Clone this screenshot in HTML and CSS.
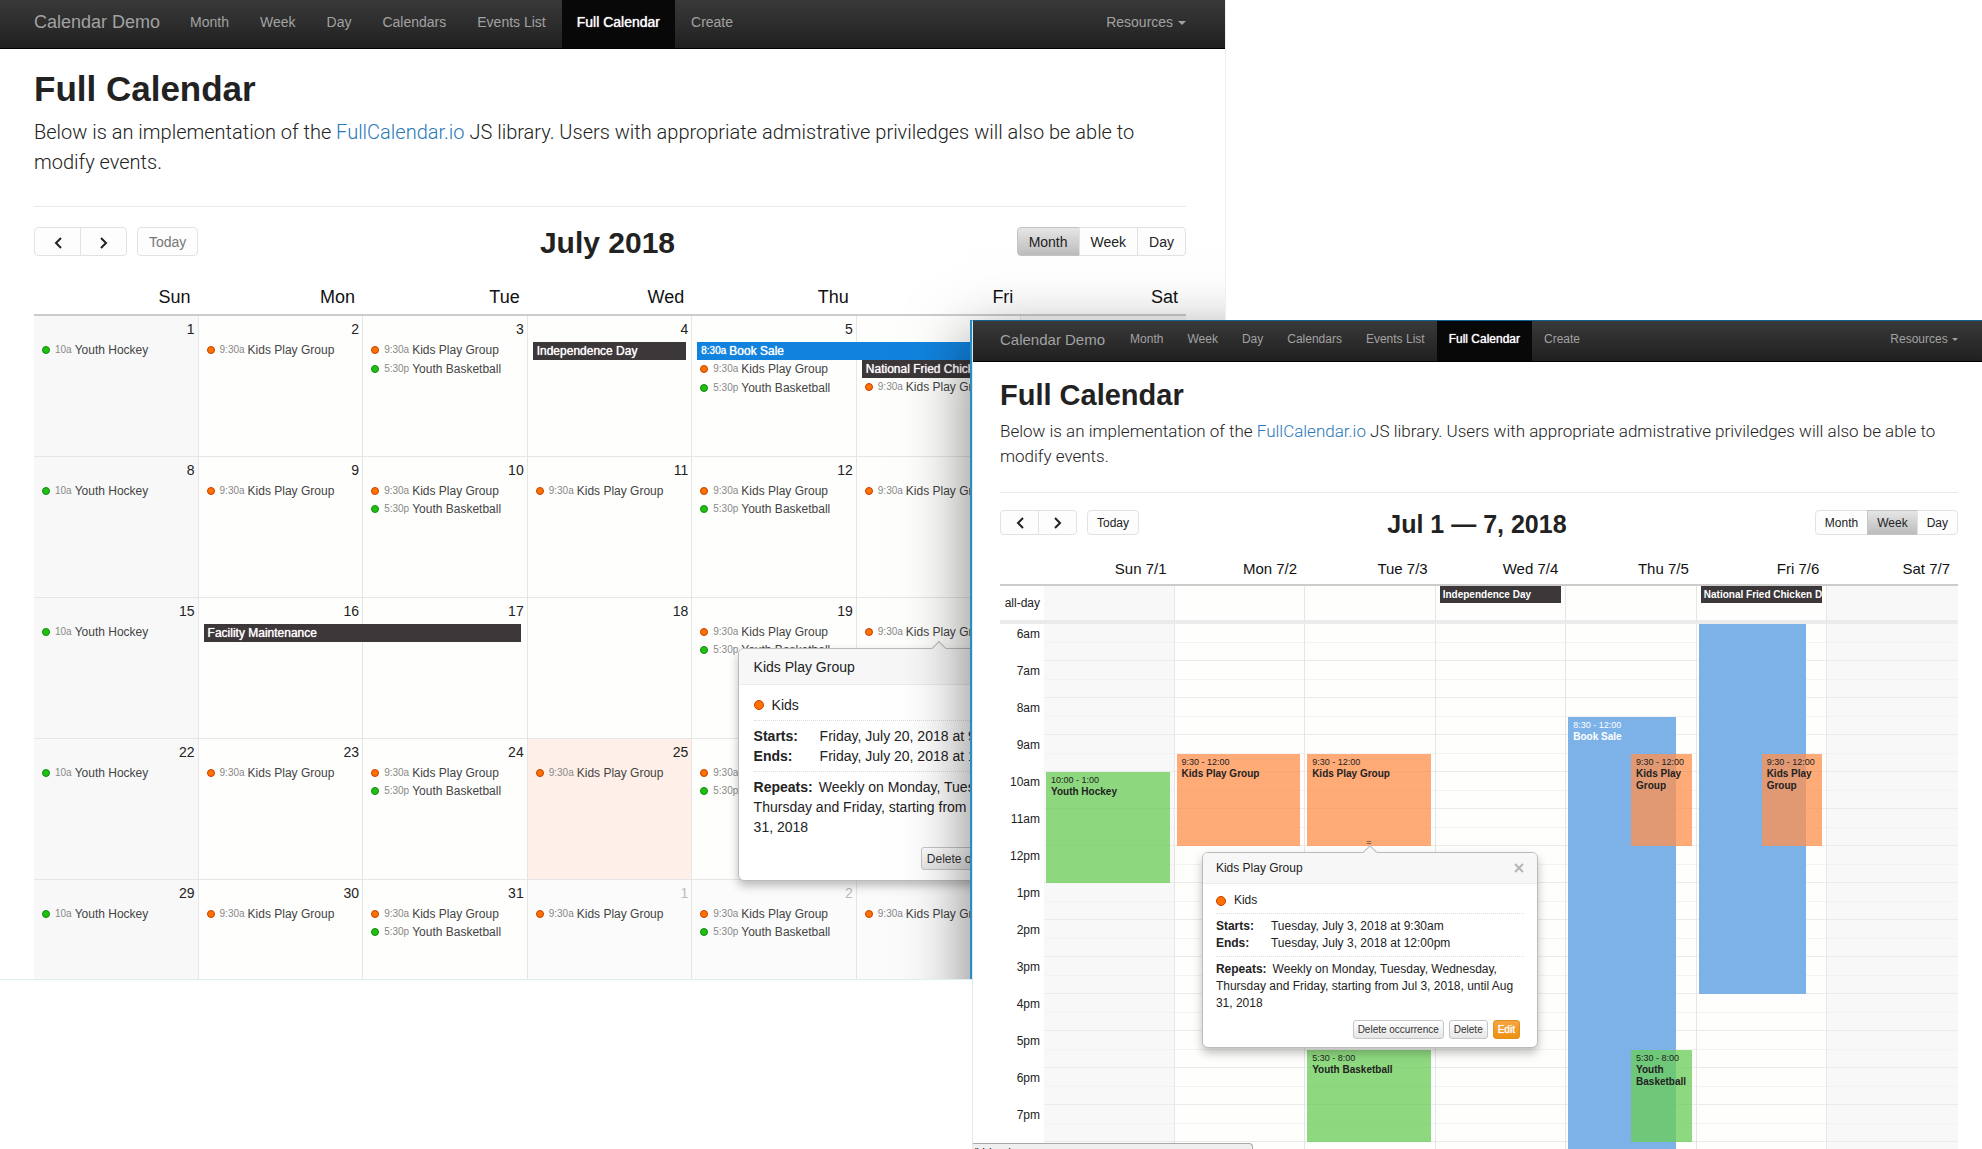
FILE: index.html
```html
<!DOCTYPE html>
<html lang="en">
<head>
<meta charset="utf-8">
<title>Full Calendar</title>
<link rel="stylesheet" href="styles.css">
</head>
<body>
<div class="stage">

<section class="window window-month">
  <nav class="navbar">
    <a class="brand" href="#">Calendar Demo</a>
    <ul class="nav">
      <li><a href="#">Month</a></li>
      <li><a href="#">Week</a></li>
      <li><a href="#">Day</a></li>
      <li><a href="#">Calendars</a></li>
      <li><a href="#">Events List</a></li>
      <li><a class="active" href="#">Full Calendar</a></li>
      <li><a href="#">Create</a></li>
    </ul>
    <a class="resources" href="#">Resources <span class="caret"></span></a>
  </nav>
  <div class="content">
    <h1>Full Calendar</h1>
    <p class="lead">Below is an implementation of the <a href="#">FullCalendar.io</a> JS library. Users with appropriate admistrative priviledges will also be able to modify events.</p>
    <hr>
    <div class="toolbar">
      <div class="tools">
        <div class="group">
          <button class="btn arrow" type="button" aria-label="Previous"><svg viewBox="0 0 10 12"><path d="M8 1 3 6l5 5"/></svg></button>
          <button class="btn arrow" type="button" aria-label="Next"><svg viewBox="0 0 10 12"><path d="M2 1l5 5-5 5"/></svg></button>
        </div>
        <div class="group"><button class="btn" type="button" disabled>Today</button></div>
      </div>
      <h2>July 2018</h2>
      <div class="group">
        <button class="btn on" type="button">Month</button>
        <button class="btn" type="button">Week</button>
        <button class="btn" type="button">Day</button>
      </div>
    </div>
    <table class="month">
      <thead><tr><th>Sun</th><th>Mon</th><th>Tue</th><th>Wed</th><th>Thu</th><th>Fri</th><th>Sat</th></tr></thead>
      <tbody>
        <tr class="first">
          <td class="weekend"><p class="num">1</p><ul><li><i class="dot green"></i><time>10a</time>Youth Hockey</li></ul></td>
          <td><p class="num">2</p><ul><li><i class="dot"></i><time>9:30a</time>Kids Play Group</li></ul></td>
          <td><p class="num">3</p><ul><li><i class="dot"></i><time>9:30a</time>Kids Play Group</li><li><i class="dot green"></i><time>5:30p</time>Youth Basketball</li></ul></td>
          <td><p class="num">4</p><ul><li class="bar">Independence Day</li></ul></td>
          <td><p class="num">5</p><ul><li class="bar span2 blue"><time>8:30a</time>Book Sale</li><li><i class="dot"></i><time>9:30a</time>Kids Play Group</li><li><i class="dot green"></i><time>5:30p</time>Youth Basketball</li></ul></td>
          <td><p class="num">6</p><ul><li></li><li class="bar">National Fried Chicken Day</li><li><i class="dot"></i><time>9:30a</time>Kids Play Group</li></ul></td>
          <td class="weekend"><p class="num">7</p></td>
        </tr>
        <tr>
          <td class="weekend"><p class="num">8</p><ul><li><i class="dot green"></i><time>10a</time>Youth Hockey</li></ul></td>
          <td><p class="num">9</p><ul><li><i class="dot"></i><time>9:30a</time>Kids Play Group</li></ul></td>
          <td><p class="num">10</p><ul><li><i class="dot"></i><time>9:30a</time>Kids Play Group</li><li><i class="dot green"></i><time>5:30p</time>Youth Basketball</li></ul></td>
          <td><p class="num">11</p><ul><li><i class="dot"></i><time>9:30a</time>Kids Play Group</li></ul></td>
          <td><p class="num">12</p><ul><li><i class="dot"></i><time>9:30a</time>Kids Play Group</li><li><i class="dot green"></i><time>5:30p</time>Youth Basketball</li></ul></td>
          <td><p class="num">13</p><ul><li><i class="dot"></i><time>9:30a</time>Kids Play Group</li></ul></td>
          <td class="weekend"><p class="num">14</p></td>
        </tr>
        <tr>
          <td class="weekend"><p class="num">15</p><ul><li><i class="dot green"></i><time>10a</time>Youth Hockey</li></ul></td>
          <td><p class="num">16</p><ul><li class="bar span2">Facility Maintenance</li></ul></td>
          <td><p class="num">17</p></td>
          <td><p class="num">18</p></td>
          <td><p class="num">19</p><ul><li><i class="dot"></i><time>9:30a</time>Kids Play Group</li><li><i class="dot green"></i><time>5:30p</time>Youth Basketball</li></ul></td>
          <td><p class="num">20</p><ul><li><i class="dot"></i><time>9:30a</time>Kids Play Group</li></ul>
            <div class="popover">
              <h3>Kids Play Group <button class="close" type="button" aria-label="Close"><svg viewBox="0 0 10 10"><path d="M1 1l8 8M9 1 1 9"/></svg></button></h3>
              <div class="pop-body">
                <p class="cal"><i class="dot"></i>Kids</p>
                <dl><dt>Starts:</dt><dd>Friday, July 20, 2018 at 9:30am</dd><dt>Ends:</dt><dd>Friday, July 20, 2018 at 12:00pm</dd></dl>
                <p class="repeats"><b>Repeats:</b>Weekly on Monday, Tuesday, Wednesday, Thursday and Friday, starting from Jul 3, 2018, until Aug 31, 2018</p>
                <div class="actions"><button type="button">Delete occurrence</button><button type="button">Delete</button><button class="edit" type="button">Edit</button></div>
              </div>
            </div>
          </td>
          <td class="weekend"><p class="num">21</p></td>
        </tr>
        <tr>
          <td class="weekend"><p class="num">22</p><ul><li><i class="dot green"></i><time>10a</time>Youth Hockey</li></ul></td>
          <td><p class="num">23</p><ul><li><i class="dot"></i><time>9:30a</time>Kids Play Group</li></ul></td>
          <td><p class="num">24</p><ul><li><i class="dot"></i><time>9:30a</time>Kids Play Group</li><li><i class="dot green"></i><time>5:30p</time>Youth Basketball</li></ul></td>
          <td class="today"><p class="num">25</p><ul><li><i class="dot"></i><time>9:30a</time>Kids Play Group</li></ul></td>
          <td><p class="num">26</p><ul><li><i class="dot"></i><time>9:30a</time>Kids Play Group</li><li><i class="dot green"></i><time>5:30p</time>Youth Basketball</li></ul></td>
          <td><p class="num">27</p></td>
          <td class="weekend"><p class="num">28</p></td>
        </tr>
        <tr>
          <td class="weekend"><p class="num">29</p><ul><li><i class="dot green"></i><time>10a</time>Youth Hockey</li></ul></td>
          <td><p class="num">30</p><ul><li><i class="dot"></i><time>9:30a</time>Kids Play Group</li></ul></td>
          <td><p class="num">31</p><ul><li><i class="dot"></i><time>9:30a</time>Kids Play Group</li><li><i class="dot green"></i><time>5:30p</time>Youth Basketball</li></ul></td>
          <td class="other"><p class="num">1</p><ul><li><i class="dot"></i><time>9:30a</time>Kids Play Group</li></ul></td>
          <td class="other"><p class="num">2</p><ul><li><i class="dot"></i><time>9:30a</time>Kids Play Group</li><li><i class="dot green"></i><time>5:30p</time>Youth Basketball</li></ul></td>
          <td class="other"><p class="num">3</p><ul><li><i class="dot"></i><time>9:30a</time>Kids Play Group</li></ul></td>
          <td class="weekend"><p class="num">4</p></td>
        </tr>
      </tbody>
    </table>
  </div>
</section>

<section class="window window-week">
  <nav class="navbar">
    <a class="brand" href="#">Calendar Demo</a>
    <ul class="nav">
      <li><a href="#">Month</a></li>
      <li><a href="#">Week</a></li>
      <li><a href="#">Day</a></li>
      <li><a href="#">Calendars</a></li>
      <li><a href="#">Events List</a></li>
      <li><a class="active" href="#">Full Calendar</a></li>
      <li><a href="#">Create</a></li>
    </ul>
    <a class="resources" href="#">Resources <span class="caret"></span></a>
  </nav>
  <div class="content">
    <h1>Full Calendar</h1>
    <p class="lead">Below is an implementation of the <a href="#">FullCalendar.io</a> JS library. Users with appropriate admistrative priviledges will also be able to modify events.</p>
    <hr>
    <div class="toolbar">
      <div class="tools">
        <div class="group">
          <button class="btn arrow" type="button" aria-label="Previous"><svg viewBox="0 0 10 12"><path d="M8 1 3 6l5 5"/></svg></button>
          <button class="btn arrow" type="button" aria-label="Next"><svg viewBox="0 0 10 12"><path d="M2 1l5 5-5 5"/></svg></button>
        </div>
        <div class="group"><button class="btn" type="button">Today</button></div>
      </div>
      <h2>Jul 1 — 7, 2018</h2>
      <div class="group">
        <button class="btn" type="button">Month</button>
        <button class="btn on" type="button">Week</button>
        <button class="btn" type="button">Day</button>
      </div>
    </div>
    <table class="week">
      <thead><tr><th class="axis"></th><th>Sun 7/1</th><th>Mon 7/2</th><th>Tue 7/3</th><th>Wed 7/4</th><th>Thu 7/5</th><th>Fri 7/6</th><th>Sat 7/7</th></tr></thead>
      <tbody><tr>
        <th class="axis">all-day</th>
        <td class="weekend"></td><td></td><td></td>
        <td><div class="allday">Independence Day</div></td>
        <td></td>
        <td><div class="allday">National Fried Chicken Day</div></td>
        <td class="weekend"></td>
      </tr></tbody>
    </table>
    <div class="timegrid">
      <ol class="hours"><li>6am</li><li>7am</li><li>8am</li><li>9am</li><li>10am</li><li>11am</li><li>12pm</li><li>1pm</li><li>2pm</li><li>3pm</li><li>4pm</li><li>5pm</li><li>6pm</li><li>7pm</li><li>8pm</li></ol>
      <div class="day weekend">
        <article class="event green" style="--from:4;--hours:3"><time>10:00 - 1:00</time><b>Youth Hockey</b></article>
      </div>
      <div class="day">
        <article class="event orange" style="--from:3.5;--hours:2.5"><time>9:30 - 12:00</time><b>Kids Play Group</b></article>
      </div>
      <div class="day">
        <article class="event orange" style="--from:3.5;--hours:2.5"><time>9:30 - 12:00</time><b>Kids Play Group</b><span class="resizer">=</span></article>
        <article class="event green" style="--from:11.5;--hours:2.5"><time>5:30 - 8:00</time><b>Youth Basketball</b></article>
        <div class="popover">
          <h3>Kids Play Group <button class="close" type="button" aria-label="Close"><svg viewBox="0 0 10 10"><path d="M1 1l8 8M9 1 1 9"/></svg></button></h3>
          <div class="pop-body">
            <p class="cal"><i class="dot"></i>Kids</p>
            <dl><dt>Starts:</dt><dd>Tuesday, July 3, 2018 at 9:30am</dd><dt>Ends:</dt><dd>Tuesday, July 3, 2018 at 12:00pm</dd></dl>
            <p class="repeats"><b>Repeats:</b>Weekly on Monday, Tuesday, Wednesday, Thursday and Friday, starting from Jul 3, 2018, until Aug 31, 2018</p>
            <div class="actions"><button type="button">Delete occurrence</button><button type="button">Delete</button><button class="edit" type="button">Edit</button></div>
          </div>
        </div>
      </div>
      <div class="day"></div>
      <div class="day">
        <article class="event blue under" style="--from:2.5;--hours:12.5"><time>8:30 - 12:00</time><b>Book Sale</b></article>
        <article class="event orange over" style="--from:3.5;--hours:2.5"><time>9:30 - 12:00</time><b>Kids Play Group</b></article>
        <article class="event green over" style="--from:11.5;--hours:2.5"><time>5:30 - 8:00</time><b>Youth Basketball</b></article>
      </div>
      <div class="day">
        <article class="event blue under" style="--from:0;--hours:10"></article>
        <article class="event orange over" style="--from:3.5;--hours:2.5"><time>9:30 - 12:00</time><b>Kids Play Group</b></article>
      </div>
      <div class="day weekend"></div>
    </div>
  </div>
  <div class="status">/kids-play-group</div>
</section>

</div>
</body>
</html>
```

FILE: styles.css
```css
* { box-sizing: border-box; }
body { margin: 0; background: #fff; color: #222; font-family: "Liberation Sans", Arial, sans-serif; }
h1, h2, h3, p, ul, ol, dl, dd { margin: 0; padding: 0; }
ul, ol { list-style: none; }
a { text-decoration: none; }
button { font-family: inherit; }

/* Two overlapping windows on a blank desktop */
.stage { position: relative; height: 100vh; overflow: hidden; }
.window { position: absolute; overflow: hidden; background: #fff; }

.window-month {
  --text: 14px; --brand-gap: 15px; --nav-pad: 15px; --nav-gap: 1px; --pad: 34px; --end: 39px;
  --nav: 48px; --brand: 18px; --caret: 4px;
  --h1: 35px; --h1-line: 40px; --top: 20px;
  --lead: 20px; --lead-line: 30px; --lead-top: 8px; --lead-end: 29px;
  --bar-top: 20px; --h2: 30px; --h2-line: 32px; --btn: 29px; --btn-pad: 11px; --arrow: 47px;
  --head-top: 27px; --head: 18px; --head-line: 22px; --head-end: 6px;
  --pop: 402px; --pop-head: 36px; --pop-pad: 15px; --pop-line: 20px; --pop-gap: 5px; --pop-label: 66px; --small: 12px; --small-h: 23px; --small-pad: 5px;
  left: 0; top: 0; width: calc(100% * 1226 / 1982); height: 980px;
  border-bottom: 1px solid #dfeeee; border-right: 1px solid #e8f2f4;
}
.window-week {
  --text: 12px; --brand-gap: 13px; --nav-pad: 12px; --nav-gap: 0px; --pad: 27px; --end: 24px;
  --nav: 40px; --brand: 15px; --caret: 3px;
  --h1: 29px; --h1-line: 33px; --top: 17px;
  --lead: 17px; --lead-line: 25px; --lead-top: 7px; --lead-end: 23px;
  --bar-top: 17px; --h2: 25px; --h2-line: 28px; --btn: 25px; --btn-pad: 9px; --arrow: 39px;
  --head-top: 22px; --head: 15px; --head-line: 18px; --head-end: 6px;
  --pop: 336px; --pop-head: 31px; --pop-pad: 13px; --pop-line: 17px; --pop-gap: 4px; --pop-label: 55px; --small: 10px; --small-h: 19px; --small-pad: 4px;
  left: calc(100% * 972 / 1982); right: 0; top: 320px; bottom: 0;
  border-top: 1px solid #10658f; border-left: 1px solid #dcebf0;
}
/* Focus ring and shadow that the front window casts on the back one */
.window-month::after {
  content: ""; position: absolute; z-index: 9;
  left: calc(100% * 971 / 1226); top: 320px; width: 100%; height: 1000px;
  border: 2px solid #2a8cc6;
  box-shadow: 0 20px 60px rgba(0, 0, 0, .5);
}
.window-week { z-index: 10; }

.navbar {
  display: flex; height: calc(var(--nav) + 1px); padding: 0 var(--end) 0 var(--pad);
  background: linear-gradient(#393939, #202020); border-bottom: 1px solid #000;
  font-size: var(--text); line-height: calc(var(--nav) - 3px);
}
.navbar a { color: #a2a2a2; }
.navbar .brand { font-size: var(--brand); margin-right: var(--brand-gap); }
.nav { display: flex; flex: 1; gap: var(--nav-gap); }
.nav a { display: block; height: var(--nav); padding: 0 var(--nav-pad); }
.nav .active { background: #080808; color: #fff; text-shadow: 0 0 1px #fff; }
.caret { display: inline-block; margin-left: 1px; vertical-align: middle; border: var(--caret) solid transparent; border-top-color: #a2a2a2; border-bottom: 0; }

.content { padding: var(--top) var(--end) 0 var(--pad); }
h1 { font-size: var(--h1); line-height: var(--h1-line); }
.lead { margin-top: var(--lead-top); font: 300 var(--lead)/var(--lead-line) Roboto, sans-serif; }
.lead a { color: #2878b8; }
hr { margin: var(--lead-end) 0 0; border: 0; border-top: 1px solid #eaeaea; }

.toolbar { display: flex; justify-content: space-between; align-items: flex-start; margin-top: var(--bar-top); }
h2 { font-size: var(--h2); line-height: var(--h2-line); }
.tools { display: flex; gap: 10px; }
.group { display: flex; }
.btn {
  height: var(--btn); padding: 0 var(--btn-pad); margin-left: -1px;
  border: 1px solid #e2e2e2; background: #fdfdfd; color: #222; font-size: var(--text);
}
.btn:first-child { margin-left: 0; border-radius: 4px 0 0 4px; }
.btn:last-child { border-radius: 0 4px 4px 0; }
.btn:only-child { border-radius: 4px; }
.btn:disabled { color: #777; }
.btn.on { background: linear-gradient(#e6e6e6, #bcbcbc); border-color: #c4c4c4; }
.btn.arrow { width: var(--arrow); padding: 0; }
.arrow svg { width: 10px; height: 12px; vertical-align: middle; fill: none; stroke: #222; stroke-width: 2; }

table { width: 100%; margin-top: var(--head-top); border-collapse: separate; border-spacing: 0; table-layout: fixed; }
th, td { padding: 0; vertical-align: top; }
thead th { padding: 0 8px var(--head-end) 0; border-bottom: 2px solid #ccc; color: #111; font-size: var(--head); line-height: var(--head-line); font-weight: 400; text-align: right; }
td { position: relative; background: #fefefd; border-right: 1px solid #e6e6e6; }
td:last-child { border-right: 0; }
td.weekend { background: #f8f8f8; }

.month td { height: 141px; border-bottom: 1px solid #e6e6e6; }
.month td.today { background: #fef0e8; }
.month td.other { background: #fbfbfb; }
.other .num { color: #bbb; }
.num { padding: 3px 3px 2px; font-size: 14px; line-height: 20px; text-align: right; }
.month li { display: flex; align-items: center; height: 18px; padding-left: 8px; color: #444; font-size: 12px; line-height: 18px; white-space: nowrap; overflow: hidden; }
.month .first li { margin-bottom: 1px; }
.month li time { margin: 0 3px 0 5px; color: #888; font-size: 10px; }
.month li.bar { position: relative; z-index: 1; margin: 1px 5px 0; padding-left: 4px; background: #3c3739; color: #fff; text-shadow: 0 0 1px #fff; }
.month li.span2 { width: calc(200% - 10px); }
.month li.blue { background: #1183de; }
.month .bar time { margin: 0 3px 0 0; color: #fff; }

.dot { flex: none; width: 8px; height: 8px; border: 1px solid #c93d00; border-radius: 50%; background: #ff7200; }
.dot.green { background: #20c010; border-color: #0f8a10; }

/* Event details */
.popover {
  position: absolute; z-index: 3; left: 50%; width: var(--pop); margin-left: calc(var(--pop) / -2);
  border: 1px solid #bbb; border-radius: 6px; background: #fff; font-size: var(--text); line-height: var(--pop-line);
  box-shadow: 0 5px 10px rgba(0, 0, 0, .25);
}
.month .popover { top: 50px; }
.timegrid .popover { top: 228px; }
.popover::before {
  content: ""; position: absolute; left: calc(50% - 5px); top: -6px; width: 9px; height: 9px;
  border: 1px solid #bbb; border-width: 1px 0 0 1px; background: #f7f7f7; transform: rotate(45deg);
}
.popover h3 {
  position: relative; display: flex; justify-content: space-between; align-items: center;
  height: var(--pop-head); padding: 0 var(--pop-pad); border-bottom: 1px solid #ebebeb; border-radius: 5px 5px 0 0;
  background: #f7f7f7; font-size: var(--text); font-weight: 400;
}
.close { display: flex; padding: 0; border: 0; background: none; }
.close svg { width: 10px; height: 10px; stroke: #b5b5b5; stroke-width: 2; }
.pop-body { padding: calc(var(--pop-gap) * 2) var(--pop-pad); }
.cal { display: flex; align-items: center; gap: 8px; padding-bottom: var(--pop-gap); }
.cal .dot { width: 10px; height: 10px; }
dl { display: grid; grid-template-columns: var(--pop-label) 1fr; padding: var(--pop-gap) 0; border: dotted #ddd; border-width: 1px 0; }
dt, .repeats b { font-weight: 700; }
.repeats { padding-top: var(--pop-gap); }
.repeats b { margin-right: 6px; }
.actions { display: flex; justify-content: flex-end; gap: 5px; padding: calc(var(--pop-gap) * 2) 4px 0; }
.actions button { height: var(--small-h); padding: 0 var(--small-pad); border: 1px solid #c6c6c6; border-radius: 3px; background: linear-gradient(#fff, #e6e6e6); color: #333; font-size: var(--small); }
.actions .edit { border-color: #e0901e; background: linear-gradient(#f5a540, #ee9010); color: #fff; text-shadow: 0 0 1px #fff; }

/* Week view */
.axis { width: 44px; }
.week tbody .axis { padding-right: 4px; font-size: 12px; line-height: 34px; font-weight: 400; text-align: right; }
.week tbody th, .week td { height: 38px; border-bottom: 4px solid #ebebeb; }
.allday { height: 17px; margin: 0 4px; padding-left: 3px; background: #3c3739; color: #fff; font-size: 10px; font-weight: 700; line-height: 17px; white-space: nowrap; overflow: hidden; }
.timegrid { display: grid; grid-template-columns: 44px repeat(7, 1fr); --hour: 37px; }
.hours { font-size: 12px; line-height: 21px; text-align: right; }
.hours li { height: var(--hour); padding-right: 4px; }
.day {
  position: relative; border-right: 1px solid #e6e6e6;
  background: repeating-linear-gradient(transparent 0 18px, #f3f3f3 18px 19px, transparent 19px 36px, #ebebeb 36px 37px) #fefefd;
}
.day.weekend { background-color: #f8f8f8; }
.day:last-child { border-right: 0; }
.event {
  position: absolute; left: 2px; right: 4px; top: calc(var(--from) * var(--hour)); height: calc(var(--hours) * var(--hour));
  padding: 2px 5px; overflow: hidden; color: #222; font-size: 10px; line-height: 12px;
}
.event time { display: block; font-size: 9px; }
.event b { display: block; }
.event.green { background: rgba(107, 205, 87, .76); }
.event.orange { background: rgba(255, 144, 78, .76); }
.event.blue { background: #7db2e8; color: #fff; }
.event.under { right: 20px; }
.event.over { left: 50%; }
.resizer { position: absolute; left: 0; right: 0; bottom: -2px; text-align: center; font-size: 9px; line-height: 12px; }

.status { position: absolute; left: 0; bottom: -12px; width: 280px; height: 18px; border: 1px solid #aaa; border-width: 1px 1px 0 0; border-top-right-radius: 4px; background: #efefef; font-size: 12px; line-height: 18px; }
```
